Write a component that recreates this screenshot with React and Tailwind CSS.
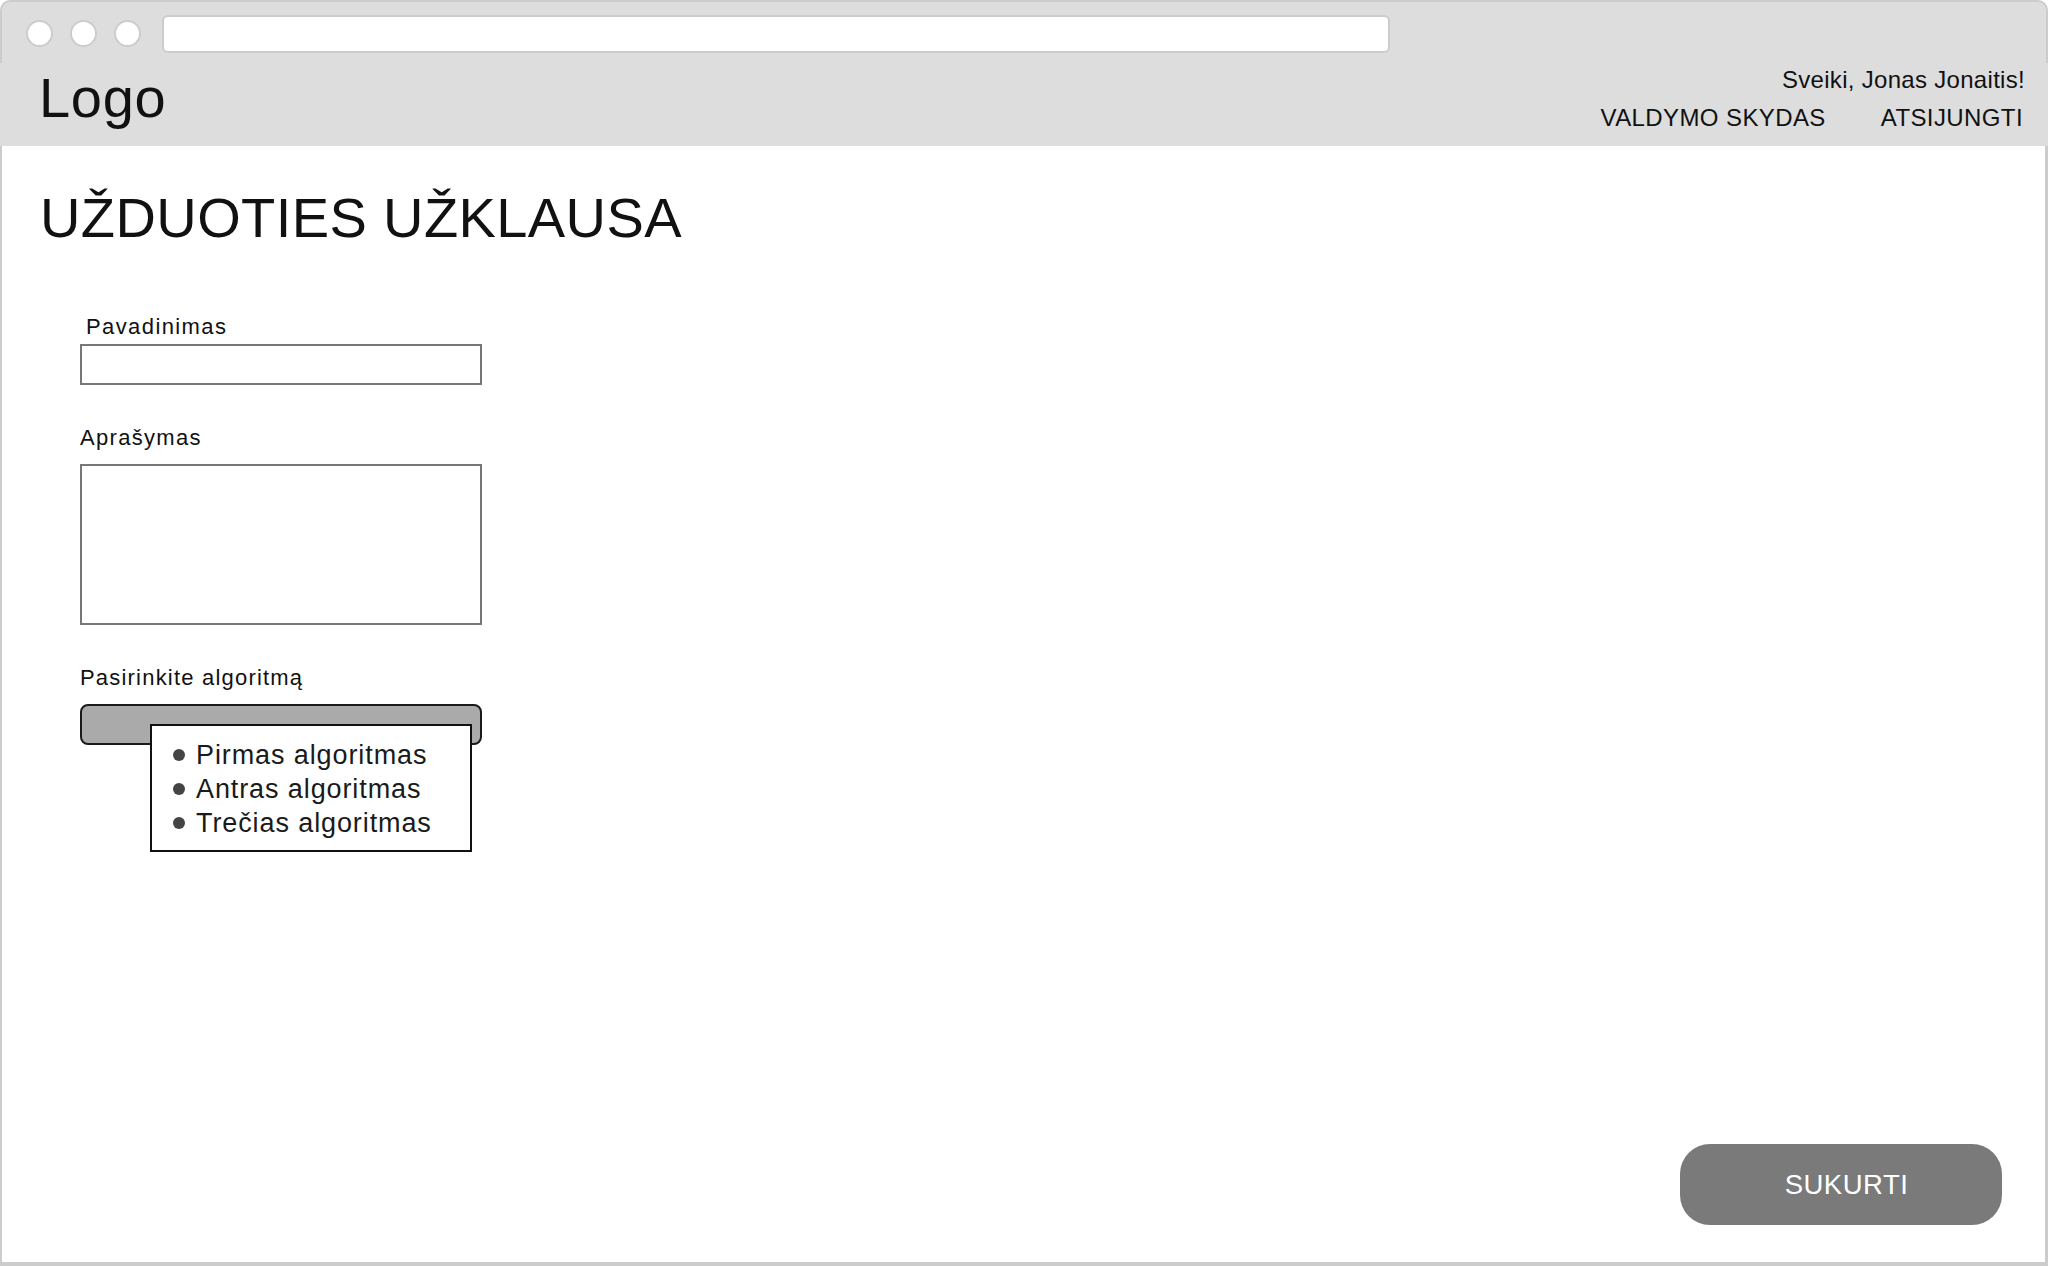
import React from "react";

const font = "font-['Liberation_Sans',Arial,Helvetica,sans-serif]";

function TrafficLight() {
  return <div className="w-[27px] h-[27px] rounded-full bg-white border-2 border-[#cccccc] shrink-0" />;
}

export default function App() {
  return (
    <div className={`w-[2048px] h-[1266px] flex flex-col bg-white text-[#111111] ${font}`}>
      {/* browser chrome */}
      <div className="h-[63px] shrink-0 bg-[#dddddd] border-t-2 border-x-2 border-[#cccccc] rounded-t-[10px] flex items-start pl-[24px] pt-[13px]">
        <div className="flex gap-[17px] mt-[5px]">
          <TrafficLight />
          <TrafficLight />
          <TrafficLight />
        </div>
        <div className="ml-[21px] w-[1228px] h-[38px] bg-white border-2 border-[#cccccc] rounded-[6px]" />
      </div>

      {/* app header */}
      <header className="h-[83px] shrink-0 bg-[#dddddd] flex justify-between">
        <div className="pl-[39px] pt-[7px] text-[56px] leading-none tracking-[0.7px]">Logo</div>
        <div className="pr-[23px] pt-[5px] flex flex-col items-end">
          <div className="text-[24px] leading-none tracking-[0.3px]">Sveiki, Jonas Jonaitis!</div>
          <nav className="mt-[14px] mr-[2px] flex gap-[55px] text-[24px] leading-none tracking-[0.4px]">
            <span>VALDYMO SKYDAS</span>
            <span>ATSIJUNGTI</span>
          </nav>
        </div>
      </header>

      {/* content */}
      <main className="flex-1 flex flex-col border-l-2 border-r-[3px] border-b-4 border-[#cccccc]">
        <div className="pl-[38px] pt-[44px]">
          <h1 className="text-[56px] leading-none tracking-[0.4px]">UŽDUOTIES UŽKLAUSA</h1>
          <form className="ml-[40px] flex flex-col items-start">
            <label className="mt-[70px] ml-[6px] text-[22px] leading-none tracking-[1.4px]">Pavadinimas</label>
            <div className="mt-[6px] w-[402px] h-[41px] border-2 border-[#777777] bg-white" />

            <label className="mt-[42px] text-[22px] leading-none tracking-[1.3px]">Aprašymas</label>
            <div className="mt-[15px] w-[402px] h-[161px] border-2 border-[#777777] bg-white" />

            <label className="mt-[42px] text-[22px] leading-none tracking-[1.2px]">Pasirinkite algoritmą</label>
            <div className="relative mt-[15px] w-[402px] h-[41px] bg-[#aaaaaa] border-2 border-[#1a1a1a] rounded-[8px]">
              <ul className="absolute left-[68px] top-[18px] w-[322px] h-[128px] bg-white border-2 border-[#111111] pl-[21px] pt-[12px]">
                {["Pirmas algoritmas", "Antras algoritmas", "Trečias algoritmas"].map((t) => (
                  <li key={t} className="flex items-center h-[34px] text-[27px] leading-[34px] tracking-[0.9px] text-[#1a1a1a]">
                    <span className="w-[12px] h-[12px] rounded-full bg-[#444444] mr-[11px] shrink-0" />
                    {t}
                  </li>
                ))}
              </ul>
            </div>
          </form>
        </div>

        <div className="mt-auto flex justify-end pr-[43px] pb-[37px]">
          <button className="w-[322px] h-[81px] rounded-[30px] bg-[#7a7a7a] text-white text-[27.5px] leading-none tracking-[0.5px] pl-[11px]">
            SUKURTI
          </button>
        </div>
      </main>
    </div>
  );
}
